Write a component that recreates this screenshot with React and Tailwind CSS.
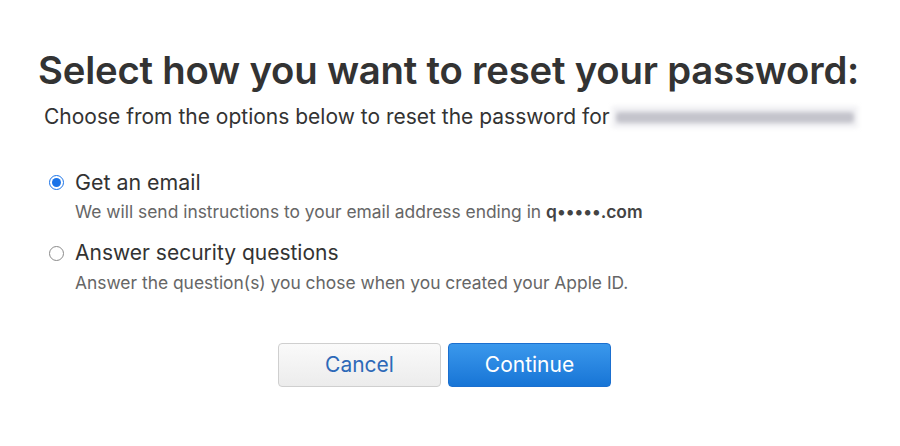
import { useState } from "react";

const App = () => {
  const [method, setMethod] = useState("email");

  return (
    <div
      className="w-[900px] h-[446px] bg-white text-[#333] overflow-hidden"
      style={{ fontFamily: "Inter, 'Liberation Sans', sans-serif" }}
    >
      <div className="pt-[44px] pl-[38px]">
        <h1 className="text-[38.3px] leading-[52px] font-semibold text-[#333] tracking-[-0.2px]">
          Select how you want to reset your password:
        </h1>
        <p className="mt-[7px] ml-[6px] text-[21px] leading-[28px] text-[#333] flex items-center">
          <span>Choose from the options below to reset the password for</span>
          <span className="ml-[2px] inline-block w-[246px] h-[22px] bg-[#f1f1f4] blur-[2px]">
            <span className="block h-[11px] mt-[6px] mx-[4px] bg-[#c4c4cc] rounded-sm" />
          </span>
        </p>

        <div className="mt-[37px] ml-[11px] flex flex-col gap-[15px]">
          <label className="flex flex-col cursor-pointer" onClick={() => setMethod("email")}>
            <div className="flex items-center gap-[11px]">
              <span
                className={`w-[15px] h-[15px] rounded-full border flex items-center justify-center ${
                  method === "email" ? "border-[#1a73e8] bg-white" : "border-[#8a8a8a] bg-white"
                }`}
              >
                {method === "email" && <span className="w-[9px] h-[9px] rounded-full bg-[#1a73e8]" />}
              </span>
              <span className="text-[21.4px] leading-[28px] text-[#333]">Get an email</span>
            </div>
            <span className="ml-[26px] mt-[4px] text-[17.4px] leading-[24px] text-[#666]">
              We will send instructions to your email address ending in{" "}
              <span className="font-semibold text-[#444]">q•••••.com</span>
            </span>
          </label>

          <label className="flex flex-col cursor-pointer" onClick={() => setMethod("questions")}>
            <div className="flex items-center gap-[11px]">
              <span
                className={`w-[15px] h-[15px] rounded-full border flex items-center justify-center ${
                  method === "questions" ? "border-[#1a73e8] bg-white" : "border-[#8a8a8a] bg-white"
                }`}
              >
                {method === "questions" && <span className="w-[9px] h-[9px] rounded-full bg-[#1a73e8]" />}
              </span>
              <span className="text-[21px] leading-[28px] text-[#333]">Answer security questions</span>
            </div>
            <span className="ml-[26px] mt-[4px] text-[17.4px] leading-[24px] text-[#666]">
              Answer the question(s) you chose when you created your Apple ID.
            </span>
          </label>
        </div>
      </div>

      <div className="mt-[48px] flex justify-center gap-[7px] pr-[11px]">
        <button
          type="button"
          className="w-[163px] h-[44px] rounded-[4px] border border-[#cfcfcf] bg-gradient-to-b from-[#fafafa] to-[#ececec] text-[#2d69b8] text-[21px]"
        >
          Cancel
        </button>
        <button
          type="button"
          className="w-[163px] h-[44px] rounded-[4px] border border-[#1b6fcf] bg-gradient-to-b from-[#3a98ec] to-[#1775d6] text-white text-[21px]"
        >
          Continue
        </button>
      </div>
    </div>
  );
};

export default App;
